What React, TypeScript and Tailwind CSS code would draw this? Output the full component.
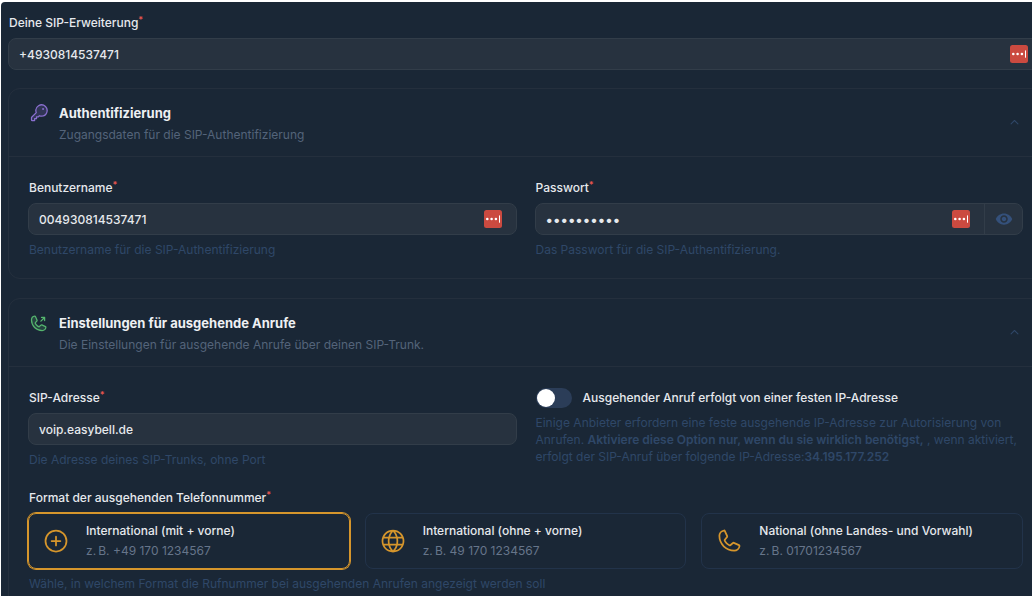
import { useState, type ReactNode } from "react";
import { MdVisibility } from "react-icons/md";
import {
  PiCaretUpBold,
  PiGlobe,
  PiKeyDuotone,
  PiPhone,
  PiPhoneOutgoingDuotone,
  PiPlusCircle,
} from "react-icons/pi";

const fieldBox =
  "mt-[7px] flex h-8 items-center rounded-lg border border-[#323d49] bg-[#27323f]";
const fieldInput =
  "h-full min-w-0 flex-1 bg-transparent px-[10px] font-medium text-[#e6e9ed] outline-none";

function Required() {
  return <span className="text-[9px] leading-[10px] font-semibold text-[#e8564f]">*</span>;
}

function FieldLabel({ htmlFor, children }: { htmlFor: string; children: ReactNode }) {
  return (
    <label htmlFor={htmlFor} className="flex h-4 pl-px text-xs leading-4 font-medium text-[#e6e9ed]">
      {children}
      <Required />
    </label>
  );
}

function Help({ children }: { children: ReactNode }) {
  return <p className="pl-px text-xs leading-[17px] text-[#2f4768]">{children}</p>;
}

function VaultButton() {
  return (
    <button type="button" aria-label="Passwortmanager" className="mr-[14px] shrink-0">
      <svg width="18" height="18" viewBox="0 0 18 18" aria-hidden="true">
        <rect width="18" height="18" rx="2.5" fill="#cb4a40" />
        <circle cx="3.3" cy="9" r="1.3" fill="#fff" />
        <circle cx="7.6" cy="9" r="1.3" fill="#fff" />
        <circle cx="11.9" cy="9" r="1.3" fill="#fff" />
        <rect x="15" y="5.3" width="1" height="7.4" rx="0.5" fill="#fff" />
      </svg>
    </button>
  );
}

function Section({
  icon,
  title,
  subtitle,
  children,
}: {
  icon: ReactNode;
  title: string;
  subtitle: string;
  children: ReactNode;
}) {
  return (
    <section className="rounded-xl border border-[#242f3d]">
      <header className="flex h-[68px] items-center border-b border-[#242f3d] pr-[18px] pl-5">
        <div className="flex h-10 w-[30px] shrink-0 items-start">{icon}</div>
        <div className="flex-1">
          <h2 className="text-[13px] leading-5 font-bold text-[#eef0f3]">{title}</h2>
          <p className="mt-1 text-xs leading-4 text-[#54647a]">{subtitle}</p>
        </div>
        <button type="button" aria-label="Einklappen" className="p-1 text-[#2f4768]">
          <PiCaretUpBold size={11} />
        </button>
      </header>
      <div className="px-[19px] pt-[23px] pb-5">{children}</div>
    </section>
  );
}

const formats = [
  { id: "plus", title: "International (mit + vorne)", example: "z.\u202fB. +49 170 1234567", Icon: PiPlusCircle },
  { id: "intl", title: "International (ohne + vorne)", example: "z.\u202fB. 49 170 1234567", Icon: PiGlobe },
  { id: "national", title: "National (ohne Landes- und Vorwahl)", example: "z.\u202fB. 01701234567", Icon: PiPhone },
];

export default function App() {
  const [format, setFormat] = useState("plus");
  const [fixedIp, setFixedIp] = useState(false);
  const [visible, setVisible] = useState(false);

  return (
    <div className="h-screen overflow-hidden bg-white pt-[2px] pl-px font-['Inter',sans-serif]">
      <main className="h-full overflow-hidden rounded-tl bg-[#1a2736] pl-[7px]">
        <form className="-mr-[11px] flex flex-col pt-[13px]">
          <FieldLabel htmlFor="extension">Deine SIP-Erweiterung</FieldLabel>
          <div className={fieldBox}>
            <input id="extension" className={`text-xs ${fieldInput}`} defaultValue="+4930814537471" />
            <VaultButton />
          </div>

          <div className="mt-[18px] flex flex-col gap-[19px]">
            <Section
              icon={<PiKeyDuotone size={20} className="text-[#8a6fd0]" />}
              title="Authentifizierung"
              subtitle="Zugangsdaten für die SIP-Authentifizierung"
            >
              <div className="grid grid-cols-2 gap-[18px]">
                <div>
                  <FieldLabel htmlFor="user">Benutzername</FieldLabel>
                  <div className={`mb-[6px] ${fieldBox}`}>
                    <input id="user" className={`text-xs ${fieldInput}`} defaultValue="004930814537471" />
                    <VaultButton />
                  </div>
                  <Help>Benutzername für die SIP-Authentifizierung</Help>
                </div>
                <div>
                  <FieldLabel htmlFor="password">Passwort</FieldLabel>
                  <div className={`mb-[6px] ${fieldBox}`}>
                    <input
                      id="password"
                      type={visible ? "text" : "password"}
                      className={`text-sm ${fieldInput}`}
                      defaultValue="geheim1234"
                    />
                    <VaultButton />
                    <button
                      type="button"
                      aria-label="Passwort anzeigen"
                      onClick={() => setVisible(!visible)}
                      className="flex h-full w-[38px] items-center justify-center border-l border-[#323d49] text-[#34507a]"
                    >
                      <MdVisibility size={18} />
                    </button>
                  </div>
                  <Help>Das Passwort für die SIP-Authentifizierung.</Help>
                </div>
              </div>
            </Section>

            <Section
              icon={<PiPhoneOutgoingDuotone size={20} className="text-[#55b56e]" />}
              title="Einstellungen für ausgehende Anrufe"
              subtitle="Die Einstellungen für ausgehende Anrufe über deinen SIP-Trunk."
            >
              <div className="grid grid-cols-2 gap-[18px]">
                <div>
                  <FieldLabel htmlFor="address">SIP-Adresse</FieldLabel>
                  <div className={`mb-[6px] ${fieldBox}`}>
                    <input id="address" className={`text-xs ${fieldInput}`} defaultValue="voip.easybell.de" />
                  </div>
                  <Help>Die Adresse deines SIP-Trunks, ohne Port</Help>
                </div>
                <div>
                  <label className="flex h-4 items-center gap-[11px] pl-px text-xs font-medium text-[#e6e9ed]">
                    <input
                      type="checkbox"
                      role="switch"
                      checked={fixedIp}
                      onChange={() => setFixedIp(!fixedIp)}
                      className="h-5 w-9 appearance-none rounded-full bg-[#2b3d58] p-[1px] before:block before:size-[18px] before:rounded-full before:bg-white checked:bg-[#d6962c] checked:before:translate-x-4"
                    />
                    Ausgehender Anruf erfolgt von einer festen IP-Adresse
                  </label>
                  <div className="mt-2">
                    <Help>
                      Einige Anbieter erfordern eine feste ausgehende IP-Adresse zur Autorisierung von
                      Anrufen. <strong className="font-semibold">Aktiviere diese Option nur, wenn du sie wirklich benötigst,</strong> ,
                      wenn aktiviert, erfolgt der SIP-Anruf über folgende IP-Adresse:
                      <strong className="font-semibold">34.195.177.252</strong>
                    </Help>
                  </div>
                </div>
              </div>

              <fieldset className="mt-[22px]">
                <legend className="flex h-4 pl-px text-xs leading-4 font-medium text-[#e6e9ed]">
                  Format der ausgehenden Telefonnummer
                  <Required />
                </legend>
                <div className="mt-[7px] mb-[6px] grid grid-cols-3 gap-[15px]">
                  {formats.map(({ id, title, example, Icon }) => (
                    <label
                      key={id}
                      className={`flex h-14 items-center rounded-lg border pl-[13px] ${
                        format === id
                          ? "border-[#d6962c] ring-1 ring-[#d6962c]"
                          : "border-[#22334a]"
                      }`}
                    >
                      <input
                        type="radio"
                        name="format"
                        value={id}
                        checked={format === id}
                        onChange={() => setFormat(id)}
                        className="sr-only"
                      />
                      <Icon size={28} className="mr-4 shrink-0 text-[#d6962c]" />
                      <span className="flex flex-col gap-1">
                        <span className="text-xs leading-4 font-medium text-[#e6e9ed]">{title}</span>
                        <span className="text-xs leading-4 text-[#66758a]">{example}</span>
                      </span>
                    </label>
                  ))}
                </div>
                <Help>Wähle, in welchem Format die Rufnummer bei ausgehenden Anrufen angezeigt werden soll</Help>
              </fieldset>
            </Section>
          </div>
        </form>
      </main>
    </div>
  );
}
